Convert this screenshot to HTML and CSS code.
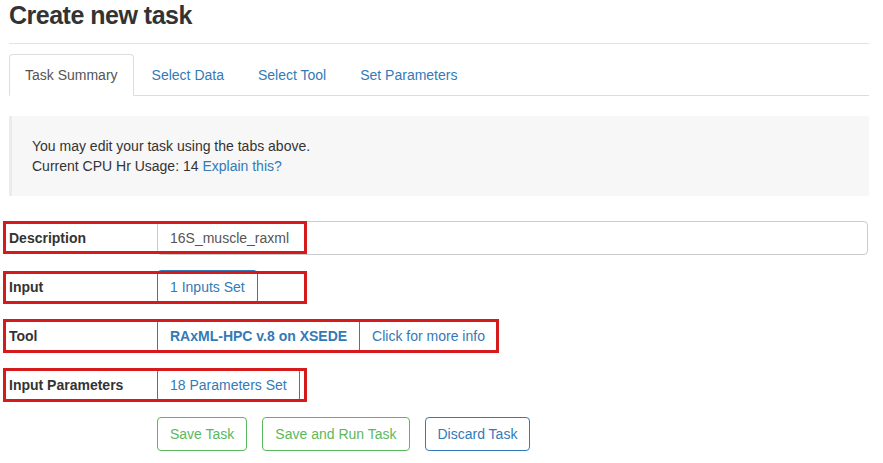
FILE: index.html
```html
<!DOCTYPE html>
<html lang="en">
<head>
<meta charset="utf-8">
<title>Create new task</title>
<link rel="stylesheet" href="styles.css">
</head>
<body>
<div class="page">
  <h1 class="title">Create new task</h1>
  <hr class="rule">
  <ul class="tabs">
    <li class="tab active"><a>Task Summary</a></li>
    <li class="tab"><a>Select Data</a></li>
    <li class="tab"><a>Select Tool</a></li>
    <li class="tab"><a>Set Parameters</a></li>
  </ul>
  <div class="well">
    <p>You may edit your task using the tabs above.</p>
    <p>Current CPU Hr Usage: 14 <a class="link">Explain this?</a></p>
  </div>
  <div class="rows">
    <div class="row">
      <div class="label">Description</div>
      <div class="value"><div class="field">16S_muscle_raxml</div></div>
      <span class="mark mark-short"></span>
    </div>
    <div class="row">
      <div class="label">Input</div>
      <div class="value"><a class="btn btn-link-blue">1 Inputs Set</a></div>
      <span class="mark mark-short mark-low"></span>
    </div>
    <div class="row">
      <div class="label">Tool</div>
      <div class="value group">
        <a class="btn btn-link-blue strong">RAxML-HPC v.8 on XSEDE</a>
        <a class="btn btn-link-blue joined">Click for more info</a>
      </div>
      <span class="mark mark-long mark-tall"></span>
    </div>
    <div class="row">
      <div class="label">Input Parameters</div>
      <div class="value"><a class="btn btn-link-blue">18 Parameters Set</a></div>
      <span class="mark mark-short mark-tall"></span>
    </div>
    <div class="actions">
      <button class="btn btn-green">Save Task</button>
      <button class="btn btn-green">Save and Run Task</button>
      <button class="btn btn-blue">Discard Task</button>
    </div>
  </div>
</div>
</body>
</html>
```

FILE: styles.css
```css
* { box-sizing: border-box; }
html, body { margin: 0; padding: 0; background: #fff; }
body {
  font-family: "Liberation Sans", Arial, sans-serif;
  font-size: 14px;
  line-height: 20px;
  color: #333;
  overflow: hidden;
}
.page {
  width: 860px;
  margin-left: 9px;
}
.title {
  margin: 0;
  font-size: 25px;
  line-height: 30px;
  font-weight: bold;
  letter-spacing: -0.5px;
  color: #333;
}
.rule {
  margin: 13px 0 10px;
  border: 0;
  border-top: 1px solid #e3e3e3;
  height: 0;
}
.tabs {
  list-style: none;
  margin: 0;
  padding: 0;
  display: flex;
  border-bottom: 1px solid #ddd;
}
.tab {
  margin-right: 2px;
  margin-bottom: -1px;
}
.tab a {
  display: block;
  padding: 10px 15px;
  border: 1px solid transparent;
  border-radius: 4px 4px 0 0;
  color: #337ab7;
  text-decoration: none;
}
.tab.active a {
  color: #555;
  background: #fff;
  border-color: #ddd #ddd transparent;
}
.well {
  margin-top: 20px;
  background: #f7f7f7;
  border-left: 3px solid #ebebeb;
  padding: 20px;
}
.well p { margin: 0; }
.link { color: #337ab7; text-decoration: none; }
.rows { margin-top: 25px; }
.row {
  position: relative;
  display: flex;
  align-items: center;
  height: 34px;
  margin-bottom: 15px;
}
.label {
  width: 148px;
  font-weight: bold;
  color: #333;
}
.value {
  display: flex;
  flex: 1;
}
.field {
  flex: 1;
  height: 34px;
  padding: 6px 12px;
  border: 1px solid #ccc;
  border-radius: 4px;
  margin-right: 1px;
  color: #555;
}
.btn {
  display: inline-block;
  height: 34px;
  padding: 6px 12px;
  font-family: inherit;
  font-size: 14px;
  line-height: 20px;
  border: 1px solid #337ab7;
  border-radius: 4px;
  background: #fff;
  text-decoration: none;
  white-space: nowrap;
}
.btn-link-blue { color: #337ab7; }
.strong { font-weight: bold; border-radius: 4px 0 0 4px; }
.joined { margin-left: -1px; border-radius: 0 4px 4px 0; }
.mark {
  position: absolute;
  left: -6px;
  top: 0;
  height: 33px;
  border: 3px solid #d41a1a;
  pointer-events: none;
}
.mark-short { width: 304px; }
.mark-long { width: 496px; }
.mark-low { top: 1px; }
.mark-tall { height: 34px; }
.actions {
  display: flex;
  gap: 15px;
  padding-left: 148px;
}
.btn-green { color: #5cb85c; border-color: #5cb85c; }
.btn-blue { color: #337ab7; border-color: #337ab7; }
```
